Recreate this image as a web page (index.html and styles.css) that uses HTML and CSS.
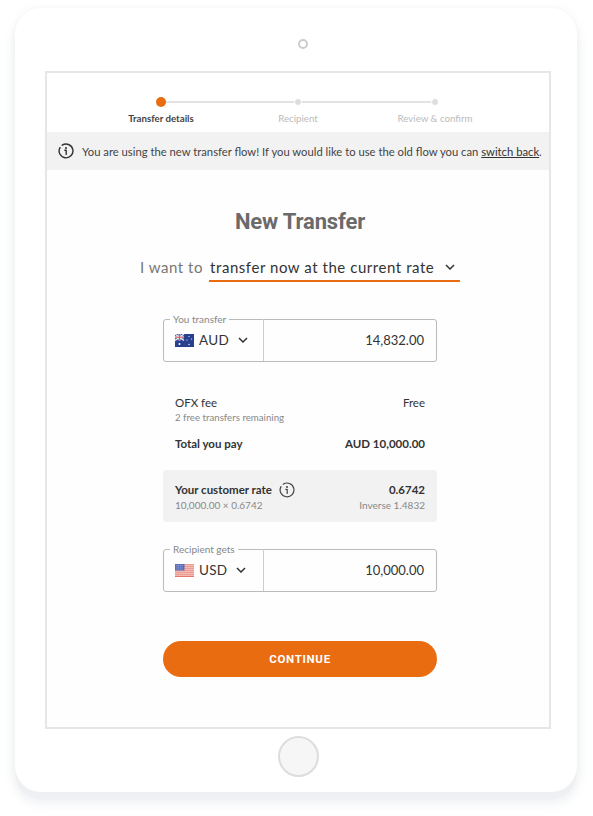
FILE: index.html

```html
<!DOCTYPE html>
<html lang="en">
<head>
    <meta charset="UTF-8">
    <meta name="viewport" content="width=device-width, initial-scale=1.0">
    <title>New Transfer</title>
    <link rel="stylesheet" href="styles.css">
</head>
<body>
    <div class="tablet">
        <div class="camera"></div>
        <div class="screen">
            <div class="stepper">
                <div class="step active"><span class="dot"></span><span class="step-name">Transfer details</span></div>
                <div class="step"><span class="dot"></span><span class="step-name">Recipient</span></div>
                <div class="step"><span class="dot"></span><span class="step-name">Review &amp; confirm</span></div>
            </div>
            <div class="banner">
                <svg class="info" width="16" height="16" viewBox="0 0 16 16"><path d="M4.2 2.2A6.9 6.9 0 1 1 2 4.6" fill="none" stroke="#333" stroke-width="1.4" stroke-linecap="round"/><circle cx="8" cy="4.9" r="1" fill="#333"/><path d="M6.8 7.3H8.2V11.4" fill="none" stroke="#333" stroke-width="1.4" stroke-linecap="round" stroke-linejoin="round"/></svg>
                <span>You are using the new transfer flow! If you would like to use the old flow you can <a href="#">switch back</a>.</span>
            </div>
            <div class="content">
                <h1>New Transfer</h1>
                <div class="want">
                    <span class="want-label">I want to</span>
                    <div class="want-select">
                        <span>transfer now at the current rate</span>
                        <svg width="10" height="6" viewBox="0 0 10 6"><path d="M1 1L5 5L9 1" fill="none" stroke="#333" stroke-width="1.5"/></svg>
                    </div>
                </div>
                <div class="form">
                    <fieldset class="amount">
                        <legend>You transfer</legend>
                        <div class="currency">
                            <svg class="flag" width="19" height="13" viewBox="0 0 19 13">
                                <rect width="19" height="13" fill="#27408f"/>
                                <rect width="9" height="6.5" fill="#3c4f9c"/>
                                <path d="M0 0L9 6.5M9 0L0 6.5" stroke="#eee" stroke-width="1.3"/>
                                <path d="M4.5 0V6.5M0 3.25H9" stroke="#eee" stroke-width="2"/>
                                <path d="M4.5 0V6.5M0 3.25H9" stroke="#d8574f" stroke-width="1"/>
                                <circle cx="4.5" cy="10" r="1" fill="#fff"/>
                                <circle cx="14" cy="2.5" r=".6" fill="#fff"/>
                                <circle cx="16.5" cy="5" r=".6" fill="#fff"/>
                                <circle cx="12" cy="6" r=".6" fill="#fff"/>
                                <circle cx="14" cy="10.5" r=".7" fill="#fff"/>
                            </svg>
                            <span>AUD</span>
                            <svg class="chev" width="10" height="6" viewBox="0 0 10 6"><path d="M1 1L5 5L9 1" fill="none" stroke="#333" stroke-width="1.5"/></svg>
                        </div>
                        <div class="value">14,832.00</div>
                    </fieldset>

                    <div class="fees">
                        <div class="row"><span>OFX fee</span><span>Free</span></div>
                        <div class="fee-note">2 free transfers remaining</div>
                        <div class="row total"><span>Total you pay</span><span>AUD 10,000.00</span></div>
                    </div>

                    <div class="rate">
                        <div class="row rate-main">
                            <span class="rate-title">Your customer rate
                                <svg width="16" height="16" viewBox="0 0 16 16"><path d="M4.2 2.2A6.9 6.9 0 1 1 2 4.6" fill="none" stroke="#444" stroke-width="1.2" stroke-linecap="round"/><circle cx="8" cy="4.9" r="1" fill="#444"/><path d="M6.8 7.3H8.2V11.4" fill="none" stroke="#444" stroke-width="1.2" stroke-linecap="round" stroke-linejoin="round"/></svg>
                            </span>
                            <span>0.6742</span>
                        </div>
                        <div class="row rate-sub"><span>10,000.00 × 0.6742</span><span>Inverse 1.4832</span></div>
                    </div>

                    <fieldset class="amount">
                        <legend>Recipient gets</legend>
                        <div class="currency">
                            <svg class="flag" width="19" height="13" viewBox="0 0 19 13">
                                <rect width="19" height="13" fill="#fbeee9"/>
                                <path d="M0 .9H19M0 2.9H19M0 4.9H19M0 6.9H19M0 8.9H19M0 10.9H19M0 12.6H19" stroke="#e4685f" stroke-width="1"/>
                                <rect width="9.5" height="6.5" fill="#5b6cb8"/>
                                <path d="M1.5 1.5H8M1.5 3.2H8M1.5 5H8" stroke="#c9d0ee" stroke-width=".7" stroke-dasharray=".8 .9"/>
                            </svg>
                            <span>USD</span>
                            <svg class="chev" width="10" height="6" viewBox="0 0 10 6"><path d="M1 1L5 5L9 1" fill="none" stroke="#333" stroke-width="1.5"/></svg>
                        </div>
                        <div class="value">10,000.00</div>
                    </fieldset>

                    <button type="button" class="continue">CONTINUE</button>
                </div>
            </div>
        </div>
        <div class="home"></div>
    </div>
</body>
</html>
```

FILE: styles.css

```css
* {
    box-sizing: border-box;
}
body {
    font-family: Lato, "Noto Sans", Arial, sans-serif;
    margin: 0;
    padding: 8px 16px 24px 15px;
    background-color: #fff;
    color: #333;
}
.tablet {
    width: 562px;
    height: 784px;
    padding: 30px 26px 0 30px;
    background: #fff;
    border-radius: 26px;
    box-shadow: 0 8px 0 -1px #eef0f3, 0 10px 12px rgba(225, 229, 234, 0.7), 0 0 6px rgba(230, 233, 237, 0.5);
}
.camera {
    width: 10px;
    height: 10px;
    margin: 1px 0 22px 253px;
    border: 2px solid #ccc;
    border-radius: 50%;
}
.screen {
    display: flex;
    flex-direction: column;
    width: 506px;
    height: 658px;
    border: 2px solid #e6e6e6;
    background: #fff;
}
.stepper {
    display: flex;
    justify-content: center;
    height: 59px;
    padding-top: 25px;
}
.step {
    position: relative;
    width: 137px;
    display: flex;
    flex-direction: column;
    align-items: center;
    gap: 6px;
    font-size: 9.7px;
    color: #bbb;
}
.step + .step::before {
    content: "";
    position: absolute;
    top: 3px;
    left: -68px;
    width: 137px;
    height: 2px;
    background: #e3e3e3;
}
.dot {
    position: relative;
    width: 8px;
    height: 8px;
    border: 1px solid #fff;
    border-radius: 50%;
    background: #ddd;
    z-index: 1;
}
.step-name {
    line-height: 13px;
}
.step.active {
    color: #444;
    font-weight: 700;
}
.step.active .dot {
    width: 10px;
    height: 10px;
    margin-top: -1px;
    margin-bottom: -1px;
    border: none;
    background: #e96d10;
}
.banner {
    display: flex;
    align-items: center;
    gap: 8px;
    height: 38px;
    padding-left: 11px;
    background: #f2f2f2;
    font-size: 11.25px;
    white-space: nowrap;
    color: #444;
}
.info {
    flex-shrink: 0;
}
.banner a {
    color: #333;
}
.content {
    flex: 1;
    background: #fefefe;
}
h1 {
    margin: 0;
    padding: 39px 0 0 4px;
    font-family: Roboto, Arial, sans-serif;
    font-size: 22px;
    line-height: 26px;
    font-weight: 700;
    letter-spacing: -0.15px;
    text-align: center;
    color: #6a6a6a;
}
.want {
    display: flex;
    justify-content: center;
    align-items: flex-start;
    gap: 6px;
    margin-top: 22px;
    padding-left: 4px;
    font-size: 15px;
    letter-spacing: 0.55px;
}
.want-label {
    line-height: 21px;
    color: #777;
}
.want-select {
    display: flex;
    align-items: center;
    justify-content: space-between;
    width: 251px;
    height: 25px;
    padding: 0 5px 3px 1px;
    border-bottom: 2px solid #e96d10;
    color: #333;
}
.form {
    width: 274px;
    margin: 32px 0 0 116px;
}
.amount {
    display: flex;
    height: 48px;
    margin: 0;
    padding: 0;
    border: 1px solid #bbb;
    border-radius: 3px;
}
.amount legend {
    margin-left: 6px;
    padding: 0 3px;
    font-size: 10px;
    line-height: 10px;
    color: #888;
}
.currency {
    display: flex;
    align-items: center;
    width: 100px;
    margin-top: -5px;
    padding-left: 11px;
    border-right: 1px solid #ccc;
    font-size: 13.5px;
    letter-spacing: 0.3px;
}
.flag {
    margin-right: 5px;
}
.chev {
    margin-left: 9px;
}
.value {
    display: flex;
    flex: 1;
    align-items: center;
    justify-content: flex-end;
    margin-top: -5px;
    padding-right: 12px;
    font-size: 13px;
}
.fees {
    padding: 34px 12px 0;
}
.row {
    display: flex;
    justify-content: space-between;
    align-items: center;
    font-size: 11.5px;
    line-height: 14px;
}
.fee-note {
    margin-top: 1px;
    font-size: 9.7px;
    line-height: 13px;
    color: #888;
}
.total {
    margin-top: 13px;
    font-weight: 700;
}
.rate {
    height: 52px;
    margin: 19px 0 22px;
    padding: 12px 12px 0;
    border-radius: 4px;
    background: #f2f2f2;
}
.rate-main {
    font-weight: 700;
}
.rate-title {
    display: flex;
    align-items: center;
    gap: 7px;
}
.rate-sub {
    margin-top: 1px;
    font-size: 10px;
    line-height: 13px;
    color: #888;
}
.continue {
    display: block;
    width: 100%;
    height: 36px;
    margin-top: 49px;
    border: none;
    border-radius: 18px;
    background: #e96d10;
    color: #fff;
    font-family: Roboto, Arial, sans-serif;
    font-size: 11.5px;
    font-weight: 700;
    letter-spacing: 0.7px;
    cursor: pointer;
}
.home {
    width: 41px;
    height: 41px;
    margin: 7px 0 0 233px;
    border: 2px solid #ddd;
    border-radius: 50%;
    background: #f6f6f6;
}
```
